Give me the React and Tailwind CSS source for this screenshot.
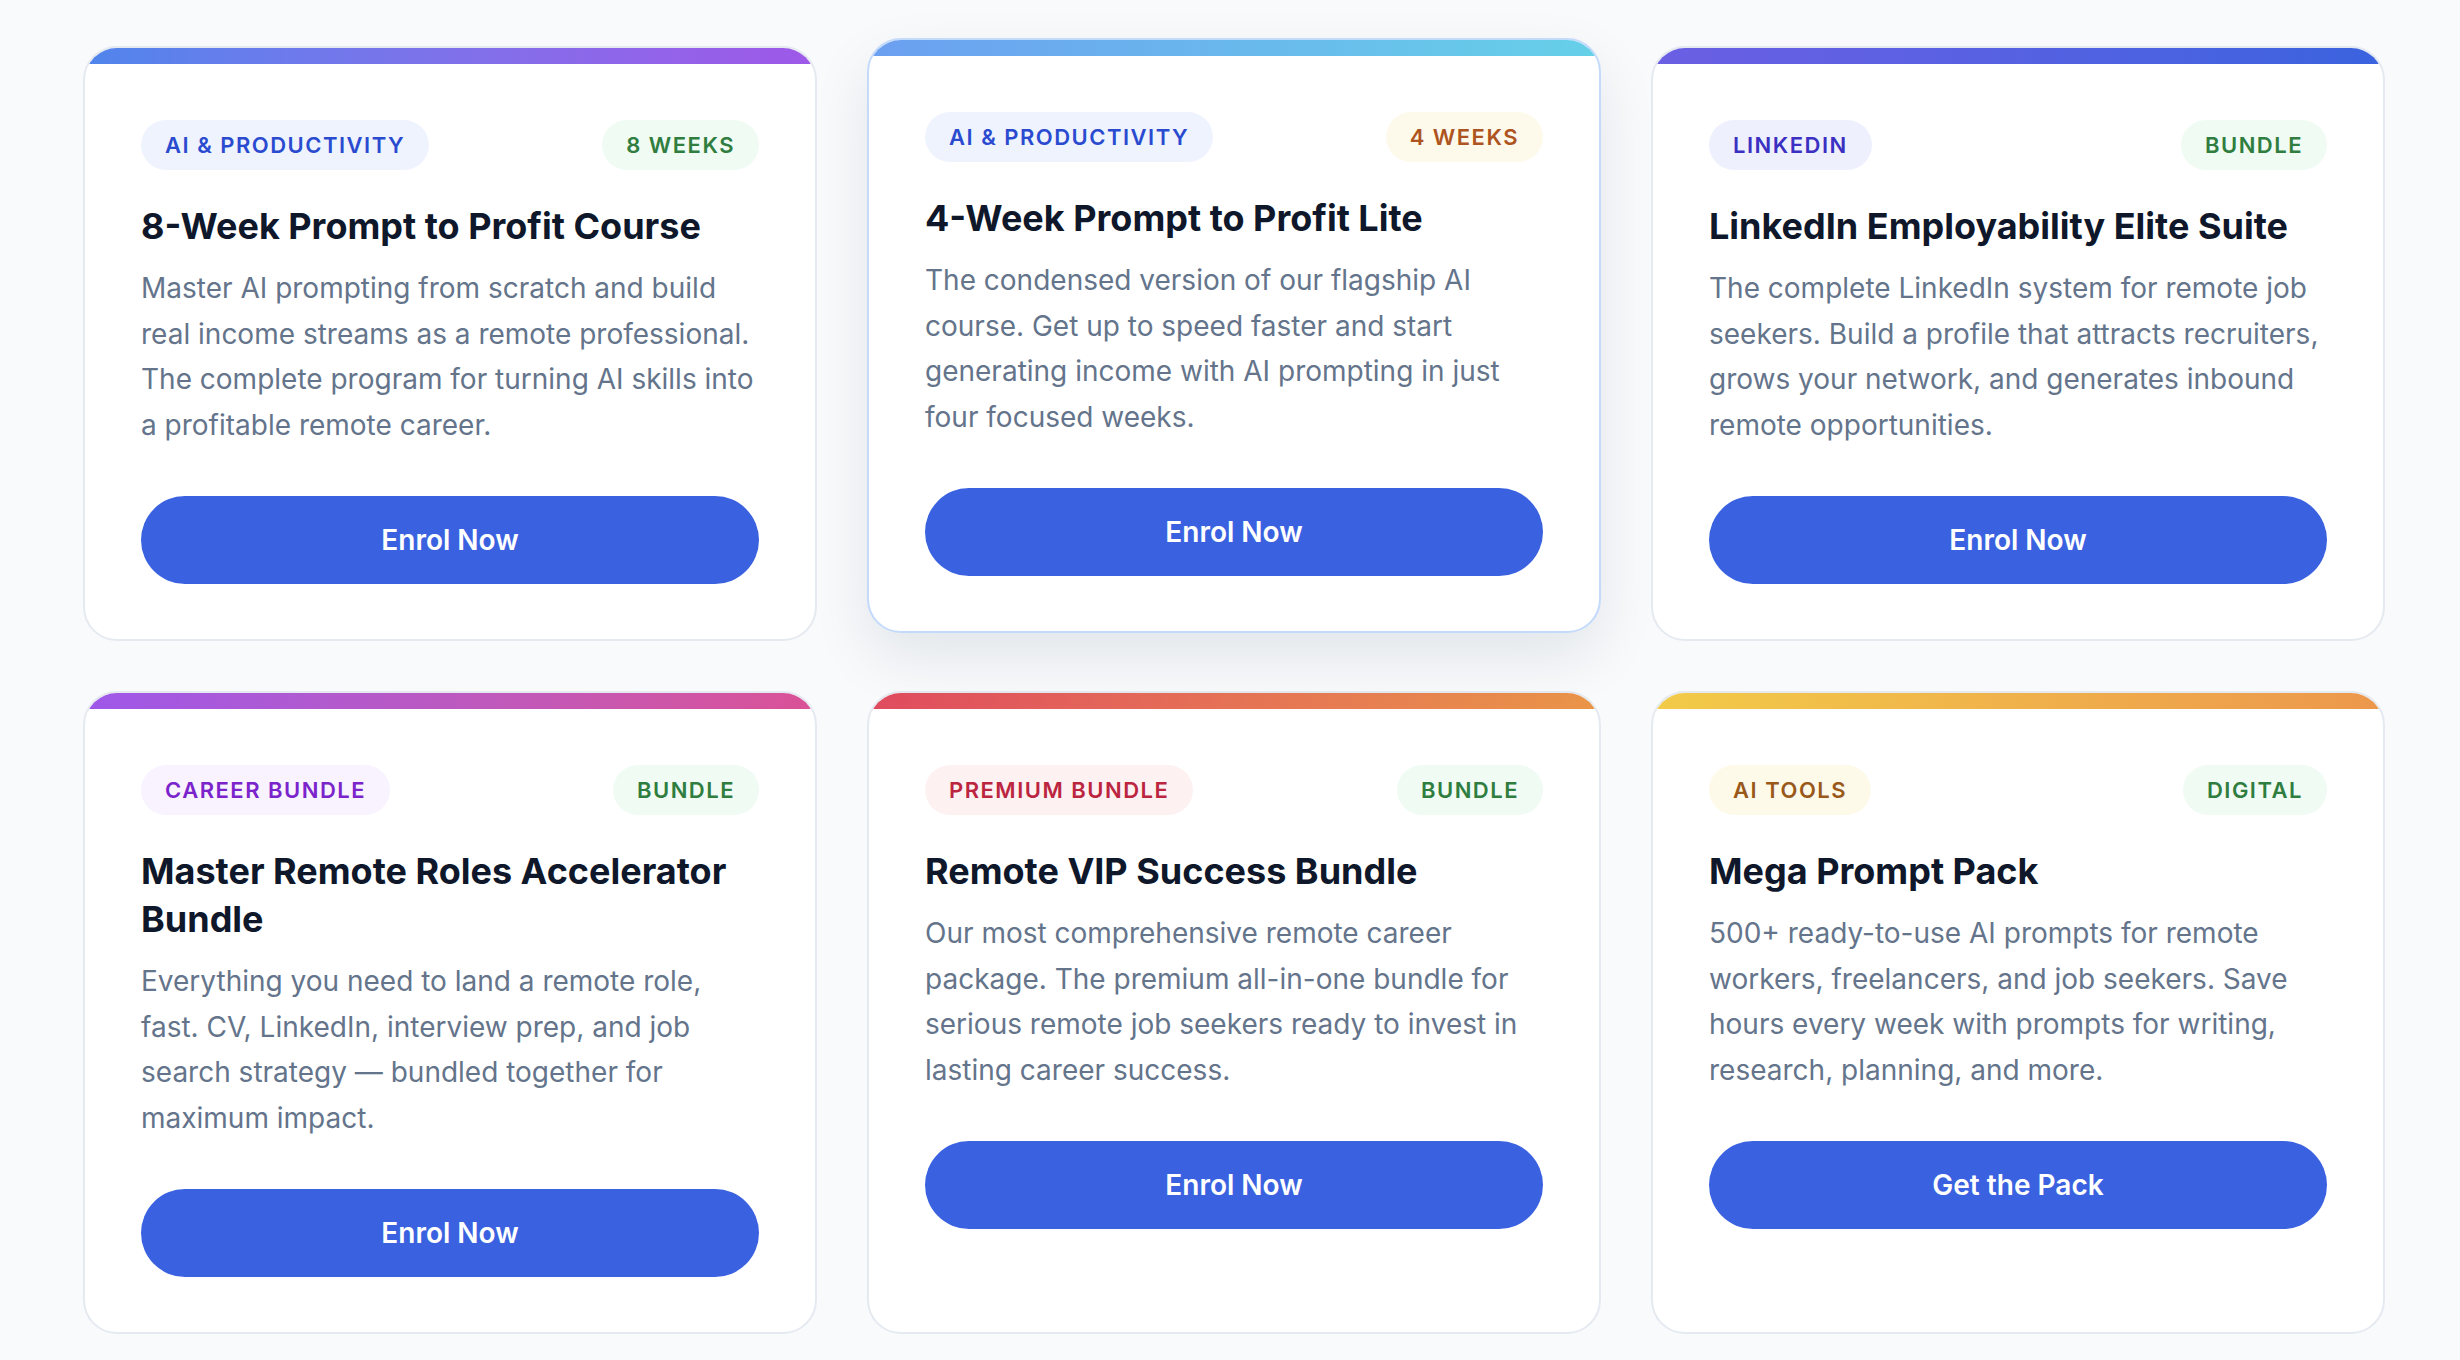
const green = 'bg-[#f0fbf3] text-[#2f7d3f]';

const cards = [
  {
    tag: 'AI & PRODUCTIVITY',
    tagClass: 'bg-[#eef3fd] text-[#2a4bd0]',
    meta: '8 WEEKS',
    metaClass: green,
    bar: 'from-[#4f85ec] to-[#9e58e8]',
    title: '8-Week Prompt to Profit Course',
    desc: 'Master AI prompting from scratch and build real income streams as a remote professional. The complete program for turning AI skills into a profitable remote career.',
    cta: 'Enrol Now',
  },
  {
    tag: 'AI & PRODUCTIVITY',
    tagClass: 'bg-[#eef3fd] text-[#2a4bd0]',
    meta: '4 WEEKS',
    metaClass: 'bg-[#fefaeb] text-[#ad5420]',
    bar: 'from-[#6b9ff0] to-[#66d0e8]',
    title: '4-Week Prompt to Profit Lite',
    desc: 'The condensed version of our flagship AI course. Get up to speed faster and start generating income with AI prompting in just four focused weeks.',
    cta: 'Enrol Now',
    active: true,
  },
  {
    tag: 'LINKEDIN',
    tagClass: 'bg-[#eef0fd] text-[#3b30c2]',
    meta: 'BUNDLE',
    metaClass: green,
    bar: 'from-[#6b5fe4] to-[#3a63df]',
    title: 'LinkedIn Employability Elite Suite',
    desc: 'The complete LinkedIn system for remote job seekers. Build a profile that attracts recruiters, grows your network, and generates inbound remote opportunities.',
    cta: 'Enrol Now',
  },
  {
    tag: 'CAREER BUNDLE',
    tagClass: 'bg-[#f8f3fe] text-[#7b24cc]',
    meta: 'BUNDLE',
    metaClass: green,
    bar: 'from-[#9e57e9] to-[#da5196]',
    title: 'Master Remote Roles Accelerator Bundle',
    desc: 'Everything you need to land a remote role, fast. CV, LinkedIn, interview prep, and job search strategy — bundled together for maximum impact.',
    cta: 'Enrol Now',
  },
  {
    tag: 'PREMIUM BUNDLE',
    tagClass: 'bg-[#fdf1f1] text-[#bb2540]',
    meta: 'BUNDLE',
    metaClass: green,
    bar: 'from-[#e04b5f] to-[#ea9548]',
    title: 'Remote VIP Success Bundle',
    desc: 'Our most comprehensive remote career package. The premium all-in-one bundle for serious remote job seekers ready to invest in lasting career success.',
    cta: 'Enrol Now',
  },
  {
    tag: 'AI TOOLS',
    tagClass: 'bg-[#fefaea] text-[#98591a]',
    meta: 'DIGITAL',
    metaClass: green,
    bar: 'from-[#f2cb48] to-[#ec974c]',
    title: 'Mega Prompt Pack',
    desc: '500+ ready-to-use AI prompts for remote workers, freelancers, and job seekers. Save hours every week with prompts for writing, research, planning, and more.',
    cta: 'Get the Pack',
  },
];

const Pill = ({ children, className }) => (
  <span className={`rounded-full px-6 py-3 text-[22px] leading-[26px] font-semibold tracking-[1.5px] ${className}`}>
    {children}
  </span>
);

const ProductCard = ({ card }) => (
  <div
    className={`flex flex-col overflow-hidden rounded-[34px] border-2 bg-white ${
      card.active
        ? 'border-[#c4dafb] -translate-y-[8px] shadow-[0_24px_60px_rgba(15,23,42,0.09)]'
        : 'border-[#e5e9f0]'
    }`}
  >
    <div className={`h-[16px] shrink-0 bg-linear-to-r ${card.bar}`} />
    <div className="flex flex-col px-[56px] pt-[56px] pb-[55px]">
      <div className="flex items-center justify-between">
        <Pill className={card.tagClass}>{card.tag}</Pill>
        <Pill className={card.metaClass}>{card.meta}</Pill>
      </div>
      <h3 className="mt-[32px] text-[36px] leading-[48px] font-bold text-[#0f172a]">{card.title}</h3>
      <p className="mt-[16px] text-[28px] leading-[45.5px] text-[#64748b]">{card.desc}</p>
      <button className="mt-[48px] h-[88px] w-full rounded-full bg-[#3a62e0] text-[28px] font-semibold text-white">
        {card.cta}
      </button>
    </div>
  </div>
);

export default function App() {
  return (
    <div
      className="min-h-screen bg-[#f8fafc] pl-[83px] pt-[46px]"
      style={{ fontFamily: 'Inter, "Noto Sans", sans-serif' }}
    >
      <div className="grid grid-cols-[734px_734px_734px] gap-x-[50px] gap-y-[50px]">
        {cards.map((card) => (
          <ProductCard key={card.title} card={card} />
        ))}
      </div>
    </div>
  );
}
